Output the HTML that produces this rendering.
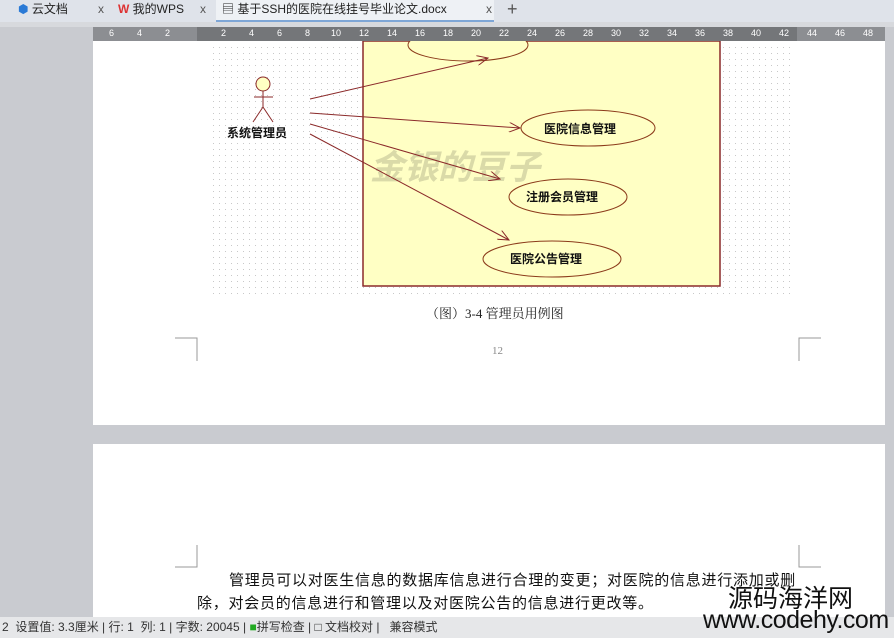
<!DOCTYPE html>
<html><head><meta charset="utf-8"><style>
*{margin:0;padding:0;box-sizing:border-box}
body{width:894px;height:638px;overflow:hidden;background:#c9cbd0;font-family:"Liberation Sans","Noto Sans CJK SC",sans-serif;position:relative}
.abs{position:absolute}
.tabs{left:0;top:0;width:894px;height:22px;background:#dfe3ea;font-size:12px;color:#222}
.tab{position:absolute;top:0;height:22px;line-height:19px}
.ruler{left:93px;top:27px;width:792px;height:14px;background:#8c8e92;color:#fff;font-size:9px}
.ruler span{position:absolute;top:1px}
.page{background:#fff;left:93px;width:792px}
.bt{position:absolute;font-size:15px;letter-spacing:0.75px;color:#111;line-height:23px;font-family:'Noto Sans CJK SC',sans-serif;white-space:nowrap}
</style></head><body>
<div class="abs tabs">
 <div class="tab" style="left:18px"><span style="color:#2a7ad6">⬢</span> 云文档</div>
 <div class="tab" style="left:98px;color:#555">x</div>
 <div class="tab" style="left:118px"><b style="color:#d33">W</b> 我的WPS</div>
 <div class="tab" style="left:200px;color:#555">x</div>
 <div class="tab" style="left:216px;width:278px;background:#eef1f5;border-bottom:2px solid #7ea6d6;padding-left:6px">▤ 基于SSH的医院在线挂号毕业论文.docx <span style="position:absolute;left:270px;color:#555">x</span></div>
 <div class="tab" style="left:507px;font-size:18px;color:#555">+</div>
</div>
<div class="abs" style="left:0;top:22px;width:894px;height:5px;background:#d7d9dd"></div>
<div class="abs ruler">
 <div class="abs" style="left:104px;top:0;width:600px;height:14px;background:#747679"></div>
 <span style="left:16px">6</span><span style="left:44px">4</span><span style="left:72px">2</span>
 <span style="left:128px">2</span><span style="left:156px">4</span><span style="left:184px">6</span><span style="left:212px">8</span><span style="left:238px">10</span><span style="left:266px">12</span><span style="left:294px">14</span><span style="left:322px">16</span><span style="left:350px">18</span><span style="left:378px">20</span><span style="left:406px">22</span><span style="left:434px">24</span><span style="left:462px">26</span><span style="left:490px">28</span><span style="left:518px">30</span><span style="left:546px">32</span><span style="left:574px">34</span><span style="left:602px">36</span><span style="left:630px">38</span><span style="left:658px">40</span><span style="left:686px">42</span><span style="left:714px">44</span><span style="left:742px">46</span><span style="left:770px">48</span>
</div>
<div class="abs page" style="top:41px;height:384px">
 <svg class="abs" style="left:0;top:0" width="792" height="384">
  <defs><pattern id="d" width="6" height="6" patternUnits="userSpaceOnUse"><rect x="0" y="0" width="1" height="1" fill="#c8c8c8"/></pattern>
  <marker id="a" markerWidth="12" markerHeight="10" refX="11" refY="5" orient="auto" markerUnits="userSpaceOnUse"><path d="M0 0L11 5L0 10" fill="none" stroke="#8b2a2a"/></marker></defs>
  <rect x="117" y="4" width="580" height="252" fill="url(#d)"/>
  <rect x="270" y="0" width="357" height="245" fill="#ffffc4" stroke="#8b2a2a" stroke-width="1.5"/>
  <ellipse cx="375" cy="4" rx="60" ry="16" fill="#ffffc4" stroke="#8b3a1a"/>
  <ellipse cx="495" cy="87" rx="67" ry="18" fill="#ffffc4" stroke="#8b3a1a"/>
  <ellipse cx="475" cy="156" rx="59" ry="18" fill="#ffffc4" stroke="#8b3a1a"/>
  <ellipse cx="459" cy="218" rx="69" ry="18" fill="#ffffc4" stroke="#8b3a1a"/>
  <text x="277" y="138" font-size="34" font-style="italic" font-weight="bold" fill="#d4d4a4" font-family="Noto Sans CJK SC,sans-serif" opacity="0.85">金银的豆子</text>
  <g stroke="#8b2a2a" fill="none" stroke-width="1">
   <line x1="217" y1="58" x2="395" y2="17" marker-end="url(#a)"/><line x1="217" y1="72" x2="427" y2="87" marker-end="url(#a)"/><line x1="217" y1="83" x2="407" y2="138" marker-end="url(#a)"/><line x1="217" y1="93" x2="416" y2="199" marker-end="url(#a)"/>
  </g>
  <g stroke="#8b2a2a" fill="none">
   <circle cx="170" cy="43" r="7" fill="#ffffc4"/><line x1="170" y1="50" x2="170" y2="66"/><line x1="161" y1="56" x2="180" y2="56"/><line x1="170" y1="66" x2="160" y2="81"/><line x1="170" y1="66" x2="180" y2="81"/>
  </g>
  <g font-size="12" font-weight="bold" fill="#111" font-family="Noto Sans CJK SC,sans-serif">
   <text x="134" y="96">系统管理员</text><text x="451" y="92">医院信息管理</text><text x="433" y="160">注册会员管理</text><text x="417" y="222">医院公告管理</text>
  </g>
  <g stroke="#999" fill="none"><path d="M82 297H104V320"/><path d="M728 297H706V320"/></g>
 </svg>
 <div class="abs" style="left:333px;top:262px;font-size:13px;color:#222;font-family:'Liberation Serif','Noto Serif CJK SC',serif">（图）3-4 管理员用例图</div>
 <div class="abs" style="left:399px;top:304px;font-size:11px;color:#888;font-family:'Liberation Serif',serif">12</div>
</div>
<div class="abs page" style="top:444px;height:174px">
 <svg class="abs" style="left:0;top:0" width="792" height="174"><g stroke="#999" fill="none"><path d="M104 101V123H82"/><path d="M706 101V123H728"/></g></svg>
 <div class="bt" style="left:136px;top:124px">管理员可以对医生信息的数据库信息进行合理的变更；对医院的信息进行添加或删</div>
 <div class="bt" style="left:104px;top:147px">除，对会员的信息进行和管理以及对医院公告的信息进行更改等。</div>
</div>
<div class="abs" style="left:0;top:617px;width:894px;height:21px;background:#e6e7e9;font-size:12px;color:#333;line-height:21px;padding-left:2px;white-space:nowrap">2&nbsp; 设置值: 3.3厘米 | 行: 1&nbsp; 列: 1 | 字数: 20045 | <span style="color:#2a2">■</span>拼写检查 | □ 文档校对 |&nbsp;&nbsp; 兼容模式</div>
<div class="abs" style="left:728px;top:582px;font-size:25px;color:#111;font-family:'Noto Sans CJK SC',sans-serif;line-height:30px">源码海洋网</div>
<div class="abs" style="left:703px;top:606px;font-size:25px;color:#111;line-height:28px;letter-spacing:-0.5px">www.codehy.com</div>
</body></html>
